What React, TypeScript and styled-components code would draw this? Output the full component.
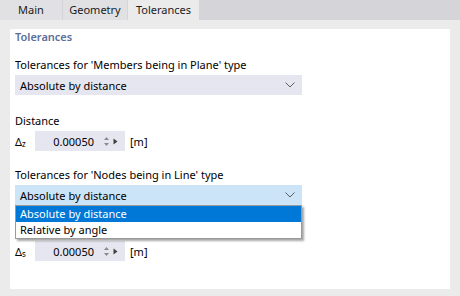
import styled, { createGlobalStyle } from "styled-components"

const GlobalStyle = createGlobalStyle`
    html, body {
        margin : 0;
        padding : 0;
        background : #ebebeb;
    }
    body {
        font-family : "Noto Sans", "Open Sans", sans-serif;
        font-size : 11px;
        color : #000;
    }
`

const tabs = [
    {name : "Main", width : 62},
    {name : "Geometry", width : 64},
    {name : "Tolerances", width : 71},
]

export default function App(){
    return(
        <>
            <GlobalStyle/>
            <Page>
                <TabBar>
                    {tabs.map((tab, index) => (
                        <Tab key={tab.name} $active={index === 2} $width={tab.width}>{tab.name}</Tab>
                    ))}
                </TabBar>
                <Panel>
                    <Header>Tolerances</Header>
                    <Group $after={18}>
                        <Label>Tolerances for 'Members being in Plane' type</Label>
                        <SelectWrap>
                            <SelectBox>
                                <span>Absolute by distance</span>
                                <Chevron/>
                            </SelectBox>
                        </SelectWrap>
                    </Group>
                    <Group $after={16}>
                        <Label>Distance</Label>
                        <Spinner symbol="Δ" sub="z" value="0.00050" unit="[m]"/>
                    </Group>
                    <Group $after={18}>
                        <Label>Tolerances for 'Nodes being in Line' type</Label>
                        <SelectWrap>
                            <SelectBox $open>
                                <span>Absolute by distance</span>
                                <Chevron/>
                            </SelectBox>
                            <DropList>
                                <DropItem $selected>Absolute by distance</DropItem>
                                <DropItem>Relative by angle</DropItem>
                            </DropList>
                        </SelectWrap>
                    </Group>
                    <Group $after={0}>
                        {/* covered by the open list */}
                        <Label $covered>Distance</Label>
                        <Spinner symbol="Δ" sub="s" value="0.00050" unit="[m]"/>
                    </Group>
                </Panel>
            </Page>
        </>
    )
}

function Chevron(){
    return(
        <ChevronIcon viewBox="0 0 10 6" fill="none" stroke="#5f5f5f" strokeWidth="1">
            <path d="M0.5 0.5L5 5L9.5 0.5"/>
        </ChevronIcon>
    )
}

function Spinner(props : {symbol : string, sub : string, value : string, unit : string}){
    return(
        <SpinRow>
            <Symbol>{props.symbol}<sub>{props.sub}</sub></Symbol>
            <SpinBox>
                <SpinValue>{props.value}</SpinValue>
                <UpDown width="7" height="11" viewBox="0 0 7 11">
                    <path d="M3.5 1L6 4H1Z" fill="#8a8a8a"/>
                    <path d="M3.5 10L6 7H1Z" fill="#8a8a8a"/>
                </UpDown>
                <svg width="5" height="7" viewBox="0 0 5 7">
                    <path d="M0.5 0.5L4.5 3.5L0.5 6.5Z" fill="#404040"/>
                </svg>
            </SpinBox>
            <Unit>{props.unit}</Unit>
        </SpinRow>
    )
}

const Page = styled.div`
    width : 460px;
    height : 296px;
    display : flex;
    flex-direction : column;
    background : #ebebeb;
`
const TabBar = styled.div`
    height : 20px;
    display : flex;
    background : #d4d4d9;
`
const Tab = styled.div<{$active? : boolean, $width : number}>`
    width : ${p => p.$width}px;
    height : 20px;
    line-height : 20px;
    text-align : center;
    background : ${p => p.$active ? "#ebebeb" : "#e1e1e3"};
    border-right : ${p => p.$active ? "none" : "1px solid #d4d4d9"};
    color : #1a1a1a;
`
const Panel = styled.div`
    margin : 9px 10px 7px 10px;
    flex : 1;
    background : #fff;
    padding : 0 5px;
    display : flex;
    flex-direction : column;
`
const Header = styled.div`
    line-height : 16px;
    color : #5b6e9c;
    font-weight : 600;
    margin-bottom : 12px;
`
const Group = styled.div<{$after : number}>`
    display : flex;
    flex-direction : column;
    gap : 2px;
    margin-bottom : ${p => p.$after}px;
`
const Label = styled.div<{$covered? : boolean}>`
    line-height : 16px;
    visibility : ${p => p.$covered ? "hidden" : "visible"};
`
const SelectWrap = styled.div`
    position : relative;
    width : 287px;
`
const SelectBox = styled.div<{$open? : boolean}>`
    height : 20px;
    display : flex;
    align-items : center;
    justify-content : space-between;
    padding : 0 7px 0 5px;
    background : ${p => p.$open ? "#cce4f7" : "#e6e6f0"};
`
const ChevronIcon = styled.svg`
    width : 10px;
    height : 6px;
`
const DropList = styled.div`
    position : absolute;
    top : 100%;
    left : 0;
    right : 0;
    background : #fff;
    border : 1px solid #9a9a9a;
    box-shadow : 2px 2px 2px rgba(0,0,0,0.35);
    z-index : 2;
`
const DropItem = styled.div<{$selected? : boolean}>`
    height : 16px;
    line-height : 16px;
    padding : 0 4px;
    background : ${p => p.$selected ? "#0078d7" : "#fff"};
    color : ${p => p.$selected ? "#fff" : "#000"};
`
const SpinRow = styled.div`
    display : flex;
    align-items : center;
    height : 20px;
`
const Symbol = styled.div`
    width : 20px;
    sub {
        font-size : 8px;
        vertical-align : -1px;
    }
`
const SpinBox = styled.div`
    width : 90px;
    height : 20px;
    background : #e6e6f0;
    display : flex;
    align-items : center;
    justify-content : flex-end;
    padding-right : 7px;
    box-sizing : border-box;
`
const SpinValue = styled.span`
    margin-right : 9px;
`
const UpDown = styled.svg`
    margin-right : 3px;
`
const Unit = styled.span`
    margin-left : 5px;
`
